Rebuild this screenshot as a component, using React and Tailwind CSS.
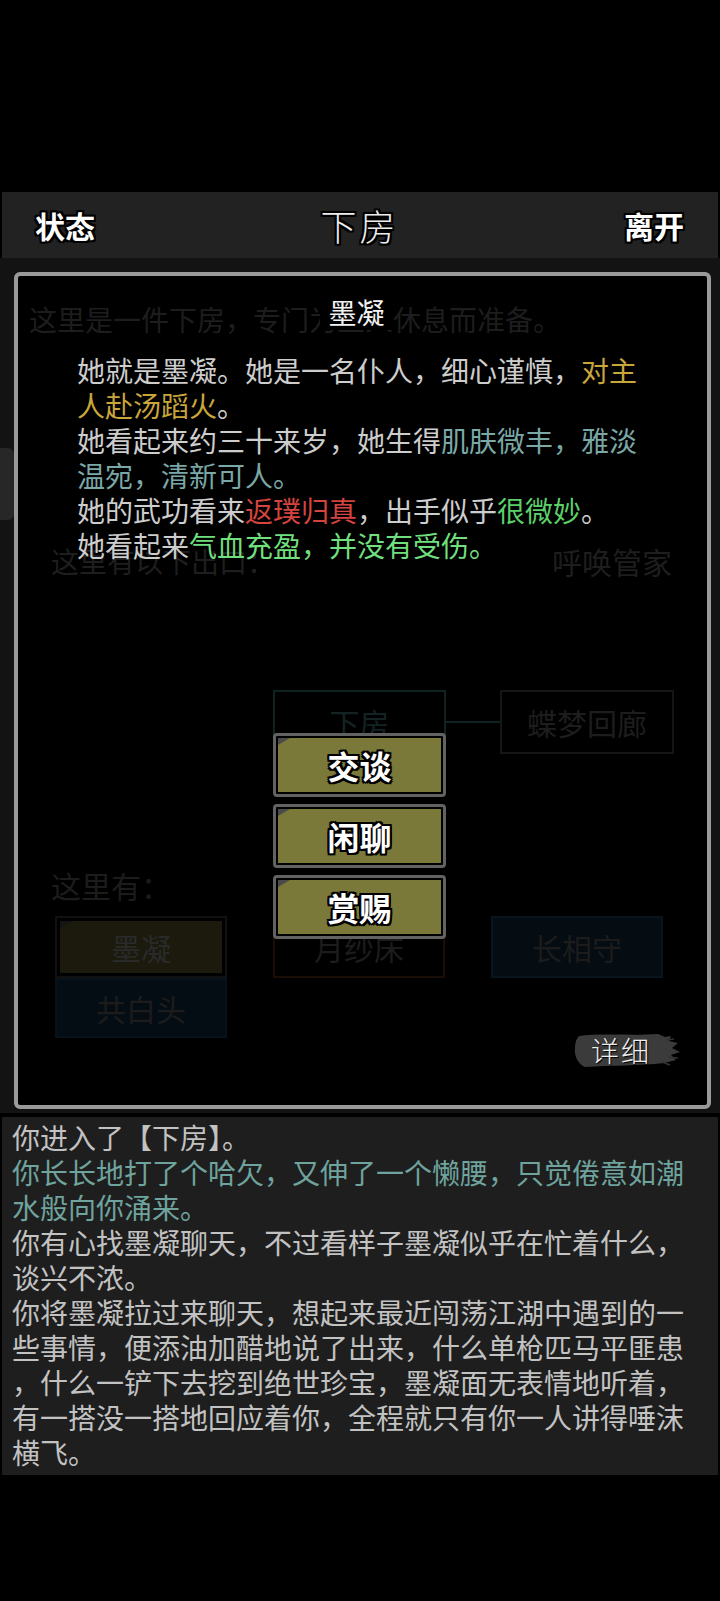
import React from "react";

const FONT = "font-['Noto_Sans_CJK_SC','Noto_Sans',sans-serif]";
const OUTLINE =
  "[text-shadow:2px_0_0_#000,-2px_0_0_#000,0_2px_0_#000,0_-2px_0_#000,2px_2px_0_#000,-2px_-2px_0_#000,2px_-2px_0_#000,-2px_2px_0_#000]";

const W = "text-[#cdcdcd]";
const GOLD = "text-[#c9a63c]";
const TEAL = "text-[#7aa8a6]";
const RED = "text-[#d4443f]";
const GREEN = "text-[#5ccf6b]";
const GREEN2 = "text-[#70df7d]";

const desc = [
  [["她就是墨凝。她是一名仆人，细心谨慎，", W], ["对主", GOLD]],
  [["人赴汤蹈火", GOLD], ["。", W]],
  [["她看起来约三十来岁，她生得", W], ["肌肤微丰，雅淡", TEAL]],
  [["温宛，清新可人。", TEAL]],
  [["她的武功看来", W], ["返璞归真", RED], ["，出手似乎", W], ["很微妙", GREEN], ["。", W]],
  [["她看起来", W], ["气血充盈，并没有受伤。", GREEN2]],
];

const LG = "text-[#c2c2c2]";
const LT = "text-[#6fa39d]";
const log = [
  ["你进入了【下房】。", LG],
  ["你长长地打了个哈欠，又伸了一个懒腰，只觉倦意如潮", LT],
  ["水般向你涌来。", LT],
  ["你有心找墨凝聊天，不过看样子墨凝似乎在忙着什么，", LG],
  ["谈兴不浓。", LG],
  ["你将墨凝拉过来聊天，想起来最近闯荡江湖中遇到的一", LG],
  ["些事情，便添油加醋地说了出来，什么单枪匹马平匪患", LG],
  ["，什么一铲下去挖到绝世珍宝，墨凝面无表情地听着，", LG],
  ["有一搭没一搭地回应着你，全程就只有你一人讲得唾沫", LG],
  ["横飞。", LG],
];

function ActionButton({ label }) {
  return (
    <div className="w-[173px] h-[64px] border-[3px] border-[#626262] rounded-[4px] bg-black p-[2px]">
      <div className="relative w-full h-full bg-[#4a4a4a]">
        <div className="absolute inset-0 bg-[#7b7939] [clip-path:polygon(12px_0,100%_0,100%_100%,0_100%,0_7px)]" />
        <div
          className={`relative h-full flex items-center justify-center text-white text-[32px] font-bold leading-none ${OUTLINE}`}
        >
          {label}
        </div>
      </div>
    </div>
  );
}

export default function App() {
  return (
    <div className={`w-[720px] h-[1601px] bg-black flex flex-col overflow-hidden ${FONT}`}>
      <div className="h-[192px] shrink-0" />

      {/* Header */}
      <div className="mx-[2px] h-[66px] shrink-0 bg-[#222222] flex items-center justify-between pl-[33px] pr-[34px]">
        <span className={`text-white text-[30px] font-bold leading-none ${OUTLINE}`}>状态</span>
        <span
          className={`text-[#ececec] text-[36px] font-light leading-none tracking-[3px] ${OUTLINE}`}
        >
          下房
        </span>
        <span className={`text-white text-[30px] font-bold leading-none ${OUTLINE}`}>离开</span>
      </div>

      {/* Main area */}
      <div className="relative h-[855px] shrink-0 bg-[#131313]">
        {/* side tab hint */}
        <div className="absolute left-0 top-[190px] w-[14px] h-[72px] bg-[#272727] rounded-r-[6px]" />

        {/* modal frame */}
        <div className="absolute left-[14px] top-[14px] w-[697px] h-[837px] border-[4px] border-[#9a9a9a] rounded-[6px] bg-black" />

        {/* underlying (dimmed) page content */}
        <div className="relative z-10 flex flex-col text-[28px] leading-[35px]">
          <div className="mt-[44px] pl-[29px] text-[#1d1d1d] whitespace-nowrap">
            这里是一件下房，专门为主人休息而准备。
          </div>
          <div className="mt-[207px] flex justify-between pl-[51px] pr-[48px] text-[#1e1e1e]">
            <span>这里有以下出口：</span>
            <span className="text-[30px]">呼唤管家</span>
          </div>
          <div className="mt-[111px] flex items-center pl-[273px]">
            <div className="w-[173px] h-[64px] border-[2px] border-[#0f2222] flex items-center justify-center text-[30px] text-[#132323]">
              下房
            </div>
            <div className="w-[54px] h-[2px] bg-[#0f2222]" />
            <div className="w-[174px] h-[64px] border-[2px] border-[#161616] flex items-center justify-center text-[30px] text-[#1d1d1d]">
              蝶梦回廊
            </div>
          </div>
          <div className="mt-[114px] pl-[51px] text-[30px] text-[#1c1c1c]">这里有：</div>
          <div className="mt-[13px] pl-[55px] grid grid-cols-[172px_172px_172px] gap-x-[46px]">
            <div className="h-[62px] border-[2px] border-[#111111] p-[3px]">
              <div className="relative h-full bg-[#141414]">
                <div className="absolute inset-0 bg-[#1b1a0d] [clip-path:polygon(12px_0,100%_0,100%_100%,0_100%,0_7px)]" />
                <div className="relative h-full flex items-center justify-center text-[30px] text-[#2a2a2a]">
                  墨凝
                </div>
              </div>
            </div>
            <div className="h-[62px] border-[2px] border-[#1a0d06] flex items-center justify-center text-[30px] text-[#1c1c1c]">
              月纱床
            </div>
            <div className="h-[62px] border-[2px] border-[#0a141d] bg-[#050c12] flex items-center justify-center text-[30px] text-[#1c1c1c]">
              长相守
            </div>
            <div className="h-[60px] border-[2px] border-[#08121a] bg-[#050d14] flex items-center justify-center text-[30px] text-[#1c1c1c]">
              共白头
            </div>
          </div>
        </div>

        {/* modal content */}
        <div className="absolute z-20 left-[14px] top-[14px] w-[697px] h-[837px] border-[4px] border-transparent flex flex-col">
          <div className="mt-[19px] h-[35px] flex justify-center pr-[12px]">
            <span className={`bg-black px-[8px] text-[28px] leading-[35px] text-[#f2f2f2] ${OUTLINE}`}>
              墨凝
            </span>
          </div>
          <div className="mt-[23px] pl-[59px] text-[28px] leading-[35px]">
            {desc.map((line, i) => (
              <div key={i} className="whitespace-nowrap">
                {line.map(([t, c], j) => (
                  <span key={j} className={c}>
                    {t}
                  </span>
                ))}
              </div>
            ))}
          </div>
          <div className="mt-[170px] ml-[255px] flex flex-col gap-[7px]">
            <ActionButton label="交谈" />
            <ActionButton label="闲聊" />
            <ActionButton label="赏赐" />
          </div>
          <div className="mt-auto mb-[36px] mr-[25px] self-end relative w-[112px] h-[38px] flex items-center justify-center">
            <svg
              className="absolute inset-0"
              width="112"
              height="38"
              viewBox="0 0 112 38"
            >
              <path
                d="M9 5 C 30 2, 62 5, 88 3 L 95 6 L 101 5 L 99 10 L 108 12 L 102 17 L 110 21 L 101 24 L 106 29 L 94 32 C 70 35, 40 34, 15 36 C 8 33, 4 25, 5 17 C 5 12, 6 8, 9 5 Z"
                fill="#3b3b3b"
              />
              <path d="M96 9 L 104 8 M 98 26 L 108 27 M 92 31 L 100 34" stroke="#333" strokeWidth="1.5" />
            </svg>
            <span className="relative text-[28px] font-light text-[#eeeeee] leading-none tracking-[2px] pr-[10px] [text-shadow:1px_1px_1px_#000]">
              详细
            </span>
          </div>
        </div>
      </div>

      <div className="h-[4px] shrink-0" />

      {/* Log */}
      <div className="mx-[2px] h-[358px] shrink-0 bg-[#1e1e1e] pt-[3px] pl-[10px] text-[28px] leading-[35px]">
        {log.map(([t, c], i) => (
          <div key={i} className={`whitespace-nowrap ${c}`}>
            {t}
          </div>
        ))}
      </div>
    </div>
  );
}
